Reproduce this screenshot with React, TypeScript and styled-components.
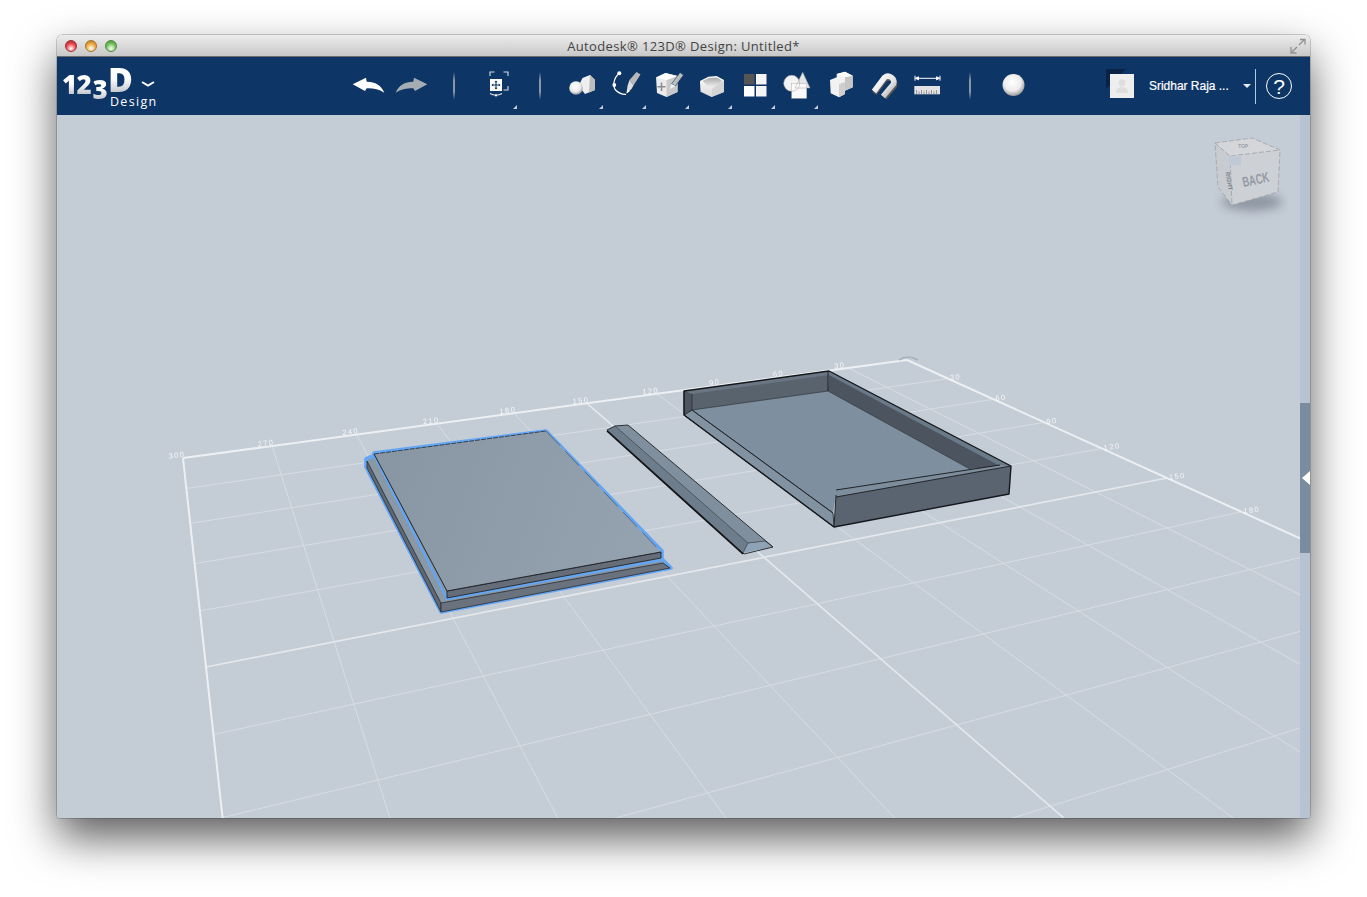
import React from "react";
import styled, { createGlobalStyle } from "styled-components";

const Global = createGlobalStyle`
  html, body { margin: 0; padding: 0; background: #fff; }
  body { font-family: "Liberation Sans", Arial, sans-serif; overflow: hidden; }
`;

const Page = styled.div`
  width: 1367px;
  height: 897px;
  padding: 35px 57px 0;
  box-sizing: border-box;
`;

const Window = styled.div`
  width: 1253px;
  height: 783px;
  display: flex;
  flex-direction: column;
  border-radius: 5px 5px 3px 3px;
  overflow: hidden;
  box-shadow: 0 20px 44px rgba(0, 0, 0, 0.64), 0 0 0 0.5px rgba(0, 0, 0, 0.35);
`;

const TitleBar = styled.div`
  position: relative;
  height: 22px;
  flex: none;
  box-sizing: border-box;
  display: flex;
  align-items: center;
  justify-content: center;
  background: linear-gradient(#ececec, #c8c8c8);
  border-bottom: 1px solid #6b6b6b;
`;

const Lights = styled.div`
  position: absolute;
  left: 8px;
  top: 5px;
  display: flex;
  gap: 8px;
`;

const Light = styled.span<{ $c: string; $d: string }>`
  width: 12px;
  height: 12px;
  border-radius: 50%;
  box-sizing: border-box;
  border: 1px solid ${(p) => p.$d};
  background: radial-gradient(circle at 50% 75%, #fff 0, ${(p) => p.$c} 55%, ${(p) => p.$d} 100%);
`;

const Title = styled.span`
  font-family: "Open Sans", "Liberation Sans", sans-serif;
  font-size: 13px;
  letter-spacing: 0.36px;
  color: #444;
  margin-top: 1px;
`;

const FullScreen = styled.svg`
  position: absolute;
  right: 4px;
  top: 3px;
`;

const Toolbar = styled.div`
  height: 58px;
  flex: none;
  display: flex;
  align-items: center;
  background: #0d3566;
`;

const Logo = styled.div`
  width: 289px;
  height: 58px;
  flex: none;
  box-sizing: border-box;
  padding: 7px 0 0 5px;
`;

const LogoMark = styled.div`
  display: flex;
  align-items: flex-start;
  height: 32px;
  font-family: "Open Sans", "Liberation Sans", sans-serif;
  font-weight: 800;
  line-height: 0.9;
`;

const LogoPart = styled.span<{ $size: number; $top: number; $w: number }>`
  font-size: ${(p) => p.$size}px;
  margin-top: ${(p) => p.$top}px;
  width: ${(p) => p.$w}px;
  background: linear-gradient(#ffffff 45%, #b9bec4);
  -webkit-background-clip: text;
  background-clip: text;
  color: transparent;
`;

const Chevron = styled.svg`
  margin: 17px 0 0 9px;
`;

const LogoSub = styled.div`
  margin: -1px 0 0 48px;
  font-family: "Open Sans", "Liberation Sans", sans-serif;
  font-size: 12.5px;
  line-height: 14px;
  letter-spacing: 1.3px;
  color: #fff;
`;

const Slot = styled.div`
  position: relative;
  width: 43px;
  height: 58px;
  flex: none;
  display: flex;
  align-items: center;
  justify-content: center;
`;

const Flyout = styled.span`
  position: absolute;
  right: 1px;
  bottom: 6px;
  width: 0;
  height: 0;
  border-left: 4px solid transparent;
  border-bottom: 4px solid #c9ced4;
`;

const Divider = styled.span`
  width: 2px;
  height: 28px;
  background: linear-gradient(transparent, #8b97a6 30%, #8b97a6 70%, transparent);
`;

const User = styled.div`
  margin-left: auto;
  display: flex;
  align-items: center;
  padding-right: 18px;
`;

const Avatar = styled.div`
  position: relative;
  width: 24px;
  height: 24px;
  display: flex;
  align-items: center;
  justify-content: center;
  background: #eeeeee;
  &::before {
    content: "";
    position: absolute;
    left: -4px;
    top: -5px;
    width: 0;
    height: 0;
    border-top: 20px solid #0a2344;
    border-right: 20px solid transparent;
    z-index: 0;
  }
  &::after {
    content: "";
    position: absolute;
    inset: 0;
    background: #eeeeee;
  }
  & > svg { position: relative; z-index: 2; }
`;

const UserName = styled.span`
  width: 94px;
  margin-left: 15px;
  font-size: 12px;
  font-weight: 400;
  letter-spacing: -0.02px;
  color: #fff;
  white-space: nowrap;
  -webkit-text-stroke: 0.2px #fff;
`;

const Caret = styled.span`
  width: 0;
  height: 0;
  border-left: 4px solid transparent;
  border-right: 4px solid transparent;
  border-top: 4px solid #e8edf2;
`;

const UserRule = styled.span`
  width: 1px;
  height: 35px;
  margin: 0 10px 0 4px;
  background: #a8cbe6;
`;

const Help = styled.span`
  width: 26px;
  height: 26px;
  box-sizing: border-box;
  border: 1.5px solid #fff;
  border-radius: 50%;
  display: flex;
  align-items: center;
  justify-content: center;
  color: #fff;
  font-size: 21px;
  line-height: 1;
`;

const Viewport = styled.div`
  position: relative;
  flex: 1;
  min-height: 0;
  display: flex;
  background: #c4ccd6;
`;

const Canvas = styled.div`
  position: relative;
  flex: 1;
  min-width: 0;
  overflow: hidden;
`;

const Scene = styled.svg`
  display: block;
`;

const ViewCube = styled.svg`
  position: absolute;
  right: 12px;
  top: 18px;
`;

const Rail = styled.div`
  position: relative;
  width: 10px;
  flex: none;
  display: flex;
  flex-direction: column;
  background: #b5c3d3;
`;

const RailThumb = styled.div`
  margin-top: 288px;
  height: 150px;
  background: #7a8c9f;
`;

const RailArrow = styled.span`
  position: absolute;
  right: 0;
  top: 356px;
  width: 0;
  height: 0;
  border-top: 7px solid transparent;
  border-bottom: 7px solid transparent;
  border-right: 8px solid #fff;
`;

/* ---- floor grid: projective map of a (u, v) plane to page coordinates ---- */
const project = (u: number, v: number): [number, number] => {
  const s = u / 10;
  const t = v / 5;
  const w = 1 + 0.2624 * s - 0.3176 * t;
  const x = 183 + (724 + 0.2624 * 907) * s + (23 - 0.3176 * 206) * t;
  const y = 458 + (-98 + 0.2624 * 360) * s + (209 - 0.3176 * 667) * t;
  return [x / w, y / w];
};

const GridLine = ({ a, b, kind }: { a: [number, number]; b: [number, number]; kind: "thin" | "mid" | "edge" }) => {
  const style = {
    thin: { stroke: "#d8dde3", strokeWidth: 0.95 },
    mid: { stroke: "#e4e8ec", strokeWidth: 1.7 },
    edge: { stroke: "#edf0f3", strokeWidth: 2 },
  }[kind];
  return <line x1={a[0]} y1={a[1]} x2={b[0]} y2={b[1]} {...style} />;
};

const ticks = Array.from({ length: 11 }, (_, i) => i);

const TickLabel = styled.text`
  font-family: "Liberation Sans", sans-serif;
  font-size: 7.5px;
  letter-spacing: 1.4px;
  fill: #ffffff;
  opacity: 0.85;
`;

const Grid = () => {
  const far = 9.6;
  return (
    <g>
      {ticks.filter((i) => i !== 5 && i !== 0 && i !== 10).map((u) => (
        <GridLine key={"u" + u} a={project(u, 0)} b={project(u, far)} kind="thin" />
      ))}
      {[1, 2, 3, 4, 6, 7, 8, 9].map((v) => (
        <GridLine key={"v" + v} a={project(0, v)} b={project(10, v)} kind="thin" />
      ))}
      <GridLine a={project(5, 0)} b={project(5, far)} kind="mid" />
      <GridLine a={project(0, 5)} b={project(10, 5)} kind="mid" />
      <GridLine a={project(0, 0)} b={project(10, 0)} kind="edge" />
      <GridLine a={project(0, 0)} b={project(0, far)} kind="edge" />
      <GridLine a={project(10, 0)} b={project(10, far)} kind="edge" />
      <path d="M899 360 Q908 354 918 360" fill="none" stroke="#a9b1ba" strokeWidth="1.6" />
      {ticks.slice(0, 10).map((u) => {
        const [x, y] = project(u, 0);
        return (
          <TickLabel key={"tu" + u} x={x - 14} y={y - 1} transform={`rotate(-7 ${x} ${y})`}>
            {(10 - u) * 30}
          </TickLabel>
        );
      })}
      {[1, 2, 3, 4, 5, 6].map((v) => {
        const [x, y] = project(10, v);
        return (
          <TickLabel key={"tv" + v} x={x + 2} y={y + 2} transform={`rotate(-7 ${x} ${y})`}>
            {v * 30}
          </TickLabel>
        );
      })}
    </g>
  );
};

const Plates = () => (
  <g strokeLinejoin="round">
    <defs>
      <linearGradient id="plateTop" x1="0" y1="0" x2="1" y2="0.2">
        <stop offset="0" stopColor="#8896a4" />
        <stop offset="1" stopColor="#94a2af" />
      </linearGradient>
    </defs>
    <path d="M366 459 L373 456 L374 453 L546 431 L662 551 L662 559 L671 568 L441 612 L366 467 Z" fill="#8a97a4" stroke="#62a6f4" strokeWidth="3.6" />
    <path d="M367 461 L441 603 L441 612 L367 468 Z" fill="#5f6872" stroke="#2b2f35" strokeWidth="0.8" />
    <path d="M441 603 L663 563 L670 568 L441 612 Z" fill="#69727d" stroke="#2b2f35" strokeWidth="0.8" />
    <path d="M374 455 L447 599 L661 560" fill="none" stroke="#62a6f4" strokeWidth="2.4" />
    <path d="M447 591 L661 552 L661 558 L447 598 Z" fill="#646d78" stroke="#23272c" strokeWidth="0.9" />
    <path d="M374 454 L546 431 L661 552 L447 591 Z" fill="url(#plateTop)" />
    <path d="M374 454 L447 591 L661 552" fill="none" stroke="#23272c" strokeWidth="1" />
    <path d="M374 454 L546 431" fill="none" stroke="#23272c" strokeWidth="0.8" strokeDasharray="5 1" />
    <path d="M546 431 L661 552" fill="none" stroke="#3a4048" strokeWidth="0.6" strokeDasharray="20 8" />
  </g>
);

const Bar = () => (
  <g strokeLinejoin="round">
    <path d="M607 430 L615 426 L748 543 L743 553 Z" fill="#6e7d8c" />
    <path d="M615 426 L628 425 L765 541 L748 543 Z" fill="#7f8f9e" />
    <path d="M628 425 L773 547 L765 541 Z" fill="#6b7a89" />
    <path d="M748 543 L765 541 L773 547 L743 553 Z" fill="#8fa3b7" />
    <path d="M607 430 L743 553 L744 554 L773 547 L628 425 L615 426 Z" fill="none" stroke="#1c2025" strokeWidth="0.9" />
    <path d="M607 431 L743 554" fill="none" stroke="#111" strokeWidth="1.6" />
    <path d="M615 426 L748 543 L743 553 M748 543 L765 541 L773 547" fill="none" stroke="#20252b" strokeWidth="0.6" />
  </g>
);

const Tray = () => (
  <g strokeLinejoin="round">
    <path d="M692 410 L828 391 L970 469 L1000 466 L836 495 L833 513 Z" fill="#7e8f9f" />
    <path d="M684 415 L692 410 L833 513 L834 527 Z" fill="#8292a1" stroke="#1c2025" strokeWidth="0.8" />
    <path d="M684 391 L829 371 L828 391 L692 410 L684 415 Z" fill="#59636e" />
    <path d="M684 391 L692 391 L692 410 L684 415 Z" fill="#4c5560" stroke="#1c2025" strokeWidth="0.6" />
    <path d="M829 371 L1011 466 L970 469 L828 391 Z" fill="#4b545f" />
    <path d="M829 371 L1011 466 L1000 466 L829 375 Z" fill="#6a7987" />
    <path d="M684 391 L829 371 L829 375 L692 394 Z" fill="#6a7683" />
    <path d="M836 493 Q836 490 840 489 L1000 465 L1011 466 L836 497 Z" fill="#7d8d9c" />
    <path d="M836 497 L1011 466 L1009 494 L834 527 Z" fill="#5a6470" />
    <path d="M684 391 L684 415 L834 527 L1009 494 L1011 466 L829 371 Z" fill="none" stroke="#15181c" strokeWidth="1.4" />
    <path d="M692 410 L828 391 L970 469" fill="none" stroke="#2a2f35" strokeWidth="0.7" />
    <path d="M828 371 L828 391 M836 495 L834 527 M836 497 L1011 466 M836 490 L1000 465" fill="none" stroke="#15181c" strokeWidth="0.9" />
    <path d="M692 410 L833 513" fill="none" stroke="#1c2025" strokeWidth="0.8" />
  </g>
);

const Cube = () => (
  <ViewCube width="80" height="90" viewBox="1208 133 80 90">
    <defs>
      <filter id="cubeShade" x="-30%" y="-100%" width="160%" height="300%">
        <feGaussianBlur stdDeviation="5" />
      </filter>
    </defs>
    <ellipse cx="1252" cy="202" rx="30" ry="9" fill="#828a95" opacity="0.8" filter="url(#cubeShade)" />
    <path d="M1215 143 L1252 138 L1280 150 L1278 192 L1232 205 L1218 187 Z" fill="#cfd2d6" />
    <path d="M1215 143 L1252 138 L1280 150 L1230 156 Z" fill="#d4d6da" />
    <path d="M1230 156 L1280 150 L1278 192 L1232 205 Z" fill="#cdd0d4" />
    <path d="M1215 143 L1230 156 L1232 205 L1218 187 Z" fill="#c8cbcf" />
    <path d="M1215 143 L1252 138 L1280 150 L1278 192 L1232 205 L1218 187 Z M1215 143 L1230 156 L1280 150 M1230 156 L1232 205" fill="none" stroke="#a3a7ac" strokeWidth="0.9" strokeDasharray="5 2" />
    <path d="M1229 156 L1241 155 L1241 165 L1230 166 Z" fill="#c0cad6" />
    <text x="1242" y="184.5" fontFamily="Liberation Sans" fontSize="14" fontWeight="700" fill="#939aa4" textLength="27" lengthAdjust="spacingAndGlyphs" transform="rotate(-12 1255 179)">BACK</text>
    <text x="1238" y="148" fontFamily="Liberation Sans" fontSize="5" fontWeight="700" fill="#9ea3a9">TOP</text>
    <text x="1219" y="172" fontFamily="Liberation Sans" fontSize="6" fontWeight="700" fill="#7f858d" transform="rotate(80 1222 176)">RIGHT</text>
  </ViewCube>
);

/* ---- toolbar icons: each one is a 40x40 drawing centred in its slot ---- */
const Icon = ({ children }: { children: React.ReactNode }) => (
  <svg width="40" height="40" viewBox="-0.5 0 40 40">
    {children}
  </svg>
);

const ArrowBack = ({ fill, flip }: { fill: string; flip?: boolean }) => (
  <Icon>
    <path
      transform={flip ? "translate(40 0) scale(-1 1)" : undefined}
      d="M4.2 18.3 L17.5 11.7 L18.2 15.7 C26 15.5 33 19 35.8 26.7 C30 23 24 22 18.2 22.3 L16.5 25 Z"
      fill={fill}
    />
  </Icon>
);

const SharedDefs = () => (
  <svg width="0" height="0" style={{ position: "absolute" }}>
    <defs>
      <linearGradient id="gWhite" x1="0" y1="0" x2="0" y2="1">
        <stop offset="0" stopColor="#ffffff" />
        <stop offset="1" stopColor="#d9d9d9" />
      </linearGradient>
      <linearGradient id="gDish" x1="0" y1="0" x2="0" y2="1">
        <stop offset="0" stopColor="#a9a9a9" />
        <stop offset="1" stopColor="#f2f2f2" />
      </linearGradient>
      <linearGradient id="gMagnet" x1="0" y1="0" x2="1" y2="1">
        <stop offset="0" stopColor="#ffffff" />
        <stop offset="0.6" stopColor="#e4e4e4" />
        <stop offset="1" stopColor="#a8a8a8" />
      </linearGradient>
      <radialGradient id="gBall" cx="0.45" cy="0.38" r="0.65">
        <stop offset="0" stopColor="#ffffff" />
        <stop offset="0.6" stopColor="#ececec" />
        <stop offset="1" stopColor="#8f8f8f" />
      </radialGradient>
    </defs>
  </svg>
);

const IconTransform = () => (
  <Icon>
    <path d="M12.5 10 V6 H17 M26 6 H30.5 V10 M30.5 20 V24 H26" fill="none" stroke="#d9dde2" strokeWidth="1.1" />
    <rect x="12.5" y="13" width="12" height="12" fill="#fff" />
    <path d="M18.5 15 V23 M14.5 19 H22.5" stroke="#0d3566" strokeWidth="1.1" fill="none" />
    <path d="M18.5 14.4 L16.9 16.2 H20.1 Z M18.5 23.6 L16.9 21.8 H20.1 Z M13.9 19 L15.7 17.4 V20.6 Z M23.1 19 L21.3 17.4 V20.6 Z" fill="#0d3566" />
    <path d="M12.5 27.5 Q18.5 31 24.5 27.5" fill="none" stroke="#e5e8eb" strokeWidth="1.1" />
    <circle cx="18.5" cy="29.4" r="1.1" fill="#fff" />
  </Icon>
);

const IconPrimitive = () => (
  <Icon>
    <path d="M19 12 L26.5 9 L31.5 14 V24 L21.5 28 L15 20 Z" fill="#efefef" />
    <path d="M26.5 9 L31.5 14 V24 L25.5 26.5 Z" fill="#bdbdbd" />
    <circle cx="12.5" cy="22" r="6.8" fill="url(#gBall)" />
  </Icon>
);

const IconSketch = () => (
  <Icon>
    <path d="M12.8 7.3 C7 12 6 20 9 24 C12 27 16 28.5 19.5 28.3" fill="none" stroke="#fff" strokeWidth="1.2" />
    <circle cx="12.8" cy="7.3" r="2" fill="#fff" />
    <circle cx="7.8" cy="19" r="1.9" fill="#fff" />
    <path d="M23 14 L30 6 L34 8.5 L27 19.5 Z" fill="#b8b8b8" />
    <path d="M23 14 L27 19.5 L25 23 L20 27.5 L21 20 Z" fill="#dedede" />
    <path d="M21 23.5 L20 27.5 L23.5 25 Z" fill="#fff" />
  </Icon>
);

const IconConstruct = () => (
  <Icon>
    <path d="M6.5 11.5 L16 7 L28 10 L28 26 L17 31 L7.5 27 Z" fill="#ececec" />
    <path d="M17 14 L28 10 V26 L17 31 Z" fill="#c9c9c9" />
    <path d="M6.5 11.5 L16 7 L28 10 L17 14 Z" fill="#fff" />
    <path d="M12 16.5 V25 M8 20.7 H16" stroke="#8d8d8d" strokeWidth="1.6" />
    <path d="M22 18 L30.5 6.5 L34 9 L26 20 Z" fill="#bcbcbc" stroke="#0d3566" strokeWidth="0.6" />
    <path d="M22 18 L26 20 L20.5 23 Z" fill="#f5f5f5" />
  </Icon>
);

const IconModify = () => (
  <Icon>
    <path d="M7.5 15 L15.8 10.7 L24 10 L31.5 14 V26 L19 31 L8 25.7 Z" fill="url(#gWhite)" />
    <path d="M20 22 L31.5 14 V26 L19 31 Z" fill="#d4d4d4" />
    <path d="M10 15 L16.5 12 L24 11.5 L29.5 14.5 L25 19 Q19 24 14 19 Z" fill="url(#gDish)" />
  </Icon>
);

const GroupCell = styled.rect``;

const IconGroup = () => (
  <Icon>
    <GroupCell x="8.5" y="8" width="10.5" height="10.5" fill="#555555" />
    <GroupCell x="20.5" y="8" width="10.5" height="10.5" fill="#f4f4f4" />
    <GroupCell x="8.5" y="20" width="10.5" height="10.5" fill="#fff" />
    <GroupCell x="20.5" y="20" width="10.5" height="10.5" fill="#f4f4f4" />
  </Icon>
);

const IconCombine = () => (
  <Icon>
    <circle cx="13.2" cy="17.3" r="8" fill="#f3f3f3" />
    <path d="M24.2 6.3 L31.5 22 H16.5 Z" fill="#e6e6e6" />
    <rect x="13.2" y="17.3" width="15" height="15" fill="#fafafa" />
    <circle cx="13.2" cy="17.3" r="8" fill="none" stroke="#a5a5a5" strokeWidth="0.5" />
    <path d="M24.2 6.3 L31.5 22 H16.5 Z" fill="none" stroke="#a5a5a5" strokeWidth="0.5" />
    <rect x="13.2" y="17.3" width="15" height="15" fill="none" stroke="#b0b0b0" strokeWidth="0.5" />
  </Icon>
);

const IconSnapBlocks = () => (
  <Icon>
    <path d="M8.5 14 L15.2 11.3 V8 L23.5 5.7 L31.2 9.7 V21.3 L23.5 24.7 V28 L17.5 31.3 L9.2 27.3 Z" fill="#f2f2f2" />
    <path d="M23.5 11 L31.2 9.7 V21.3 L23.5 24.7 Z" fill="#c6c6c6" />
    <path d="M17.5 18 L23.5 16 V28 L17.5 31.3 Z" fill="#cfcfcf" />
    <path d="M15.2 8 L23.5 5.7 L31.2 9.7 L23.5 11 Z" fill="#fff" />
  </Icon>
);

const IconMagnet = () => (
  <Icon>
    <path d="M10 27.5 L20 14 C24 10 32 13.5 30 20 L20 32" fill="none" stroke="#5b5b5b" strokeWidth="5" />
    <path d="M9.5 25.5 L20 11.5 C24 8 31 12 29 18 L18.5 30.5" fill="none" stroke="url(#gMagnet)" strokeWidth="5.5" />
  </Icon>
);

const IconRuler = () => (
  <Icon>
    <path d="M8 12.3 H32 M7.5 9.7 V14.7 M32.5 9.7 V14.7 M8 12.3 L11 10.8 V13.8 Z M32 12.3 L29 10.8 V13.8 Z" stroke="#fff" strokeWidth="1" fill="#fff" />
    <rect x="6.8" y="20" width="25.7" height="8.3" fill="#e2e2e2" />
    <path d="M9 28 V24 M11.5 28 V25.5 M14 28 V24 M16.5 28 V25.5 M19 28 V24 M21.5 28 V25.5 M24 28 V24 M26.5 28 V25.5 M29 28 V24" stroke="#777" strokeWidth="0.7" />
  </Icon>
);

const IconBall = () => (
  <Icon>
    <circle cx="20" cy="19" r="11" fill="url(#gBall)" />
  </Icon>
);

const tools: { key: string; node: React.ReactNode; flyout?: boolean }[] = [
  { key: "undo", node: <ArrowBack fill="#ffffff" /> },
  { key: "redo", node: <ArrowBack fill="#a6acb3" flip /> },
  { key: "d1", node: <Divider /> },
  { key: "transform", node: <IconTransform />, flyout: true },
  { key: "d2", node: <Divider /> },
  { key: "primitive", node: <IconPrimitive />, flyout: true },
  { key: "sketch", node: <IconSketch />, flyout: true },
  { key: "construct", node: <IconConstruct />, flyout: true },
  { key: "modify", node: <IconModify />, flyout: true },
  { key: "group", node: <IconGroup />, flyout: true },
  { key: "combine", node: <IconCombine />, flyout: true },
  { key: "blocks", node: <IconSnapBlocks /> },
  { key: "magnet", node: <IconMagnet /> },
  { key: "ruler", node: <IconRuler /> },
  { key: "d3", node: <Divider /> },
  { key: "ball", node: <IconBall /> },
];

export default function App() {
  return (
    <Page>
      <Global />
      <SharedDefs />
      <Window>
        <TitleBar>
          <Lights>
            <Light $c="#e8434a" $d="#9c2a2e" />
            <Light $c="#eea63c" $d="#a5752a" />
            <Light $c="#6fbf58" $d="#4c8a3c" />
          </Lights>
          <Title>Autodesk® 123D® Design: Untitled*</Title>
          <FullScreen width="16" height="16" viewBox="0 0 16 16">
            <path d="M9 7 L14 2 M10 1.5 H15 V6.5" fill="none" stroke="#8f8f8f" strokeWidth="1.3" />
            <path d="M7 9 L2 14 M1 9 V15 H6.5" fill="none" stroke="#8f8f8f" strokeWidth="1.3" />
          </FullScreen>
        </TitleBar>
        <Toolbar>
          <Logo>
            <LogoMark>
              <LogoPart $size={26} $top={9} $w={14.5}>1</LogoPart>
              <LogoPart $size={26} $top={9} $w={16}>2</LogoPart>
              <LogoPart $size={26} $top={14} $w={15.5}>3</LogoPart>
              <LogoPart $size={34} $top={0} $w={24}>D</LogoPart>
              <Chevron width="14" height="6" viewBox="0 0 14 6">
                <path d="M1 1 L7 4.6 L13 1" fill="none" stroke="#fff" strokeWidth="1.9" />
              </Chevron>
            </LogoMark>
            <LogoSub>Design</LogoSub>
          </Logo>
          {tools.map((t) => (
            <Slot key={t.key}>
              {t.node}
              {t.flyout && <Flyout />}
            </Slot>
          ))}
          <User>
            <Avatar>
              <svg width="14" height="16" viewBox="0 0 14 16">
                <circle cx="7" cy="5" r="3.4" fill="#dedede" />
                <path d="M1 15 Q1 9 7 9 Q13 9 13 15 Z" fill="#dedede" />
              </svg>
            </Avatar>
            <UserName>Sridhar Raja ...</UserName>
            <Caret />
            <UserRule />
            <Help>?</Help>
          </User>
        </Toolbar>
        <Viewport>
          <Canvas>
            <Scene width="1243" height="703" viewBox="57 115 1243 703">
              <Grid />
              <Plates />
              <Bar />
              <Tray />
            </Scene>
            <Cube />
          </Canvas>
          <Rail>
            <RailThumb />
            <RailArrow />
          </Rail>
        </Viewport>
      </Window>
    </Page>
  );
}
